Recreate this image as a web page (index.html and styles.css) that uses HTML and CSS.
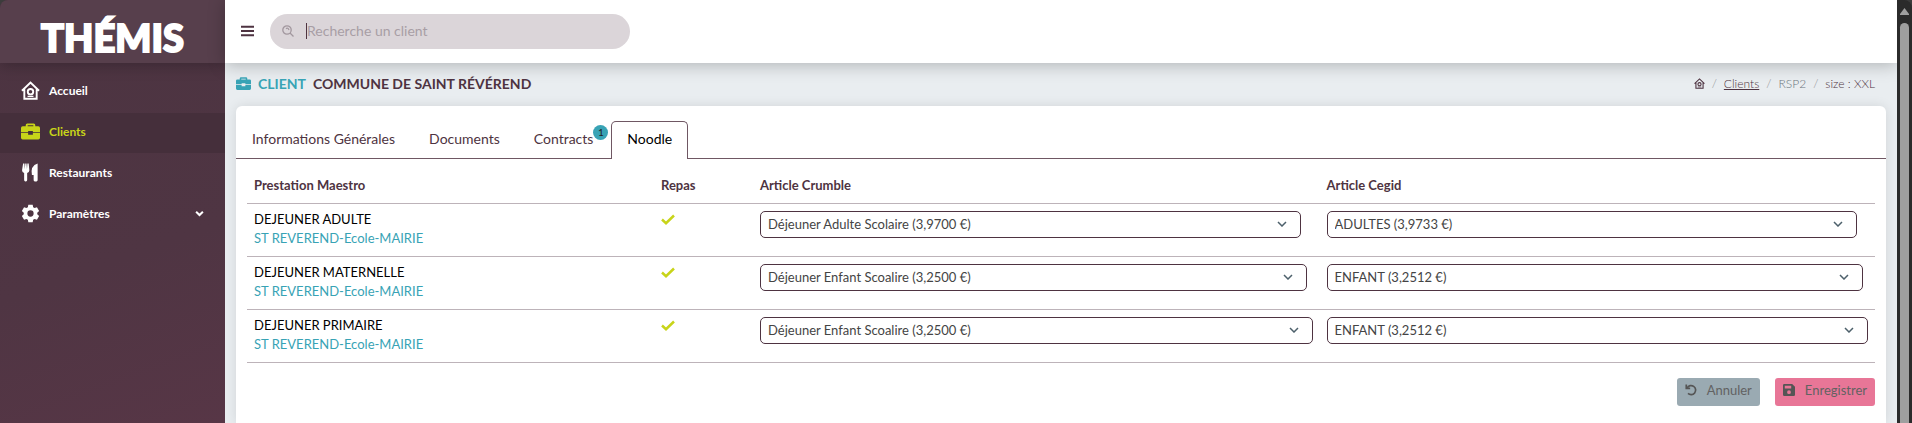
FILE: index.html
```html
<!DOCTYPE html>
<html lang="fr">
<head>
    <meta charset="UTF-8">
    <meta name="viewport" content="width=device-width, initial-scale=1.0">
    <title>Thémis - Client</title>
    <link rel="stylesheet" href="styles.css">
</head>
<body>
    <svg class="symbols" xmlns="http://www.w3.org/2000/svg">
        <symbol id="home" viewBox="0 0 16 16">
            <path d="M.8 8.2 8 1.4l7.2 6.8M2.8 7v8h10.4V7" fill="none" stroke="currentColor" stroke-width="1.6"/>
            <circle cx="8" cy="9" r="2.3" fill="none" stroke="currentColor" stroke-width="1.6"/>
            <path d="M5.5 13h5" stroke="currentColor" stroke-width="1"/>
        </symbol>
        <symbol id="briefcase" viewBox="0 0 20 17">
            <path fill="currentColor" fill-rule="evenodd" d="M5 3V1.6Q5 0 6.6 0h6.8Q15 0 15 1.6V3h3.2Q20 3 20 4.8V9.200h-7.500V8h-5v1.200H0V4.8Q0 3 1.8 3zm2 0h6V2H7z"/>
            <path fill="currentColor" d="M0 10.2h7.500V12h5v-1.800H20v5q0 1.800-1.800 1.800H1.800Q0 17 0 15.200z"/>
        </symbol>
    </svg>
    <div class="app">
        <aside class="sidebar">
            <div class="logo">THÉMIS</div>
            <nav class="menu">
                <a href="#"><svg class="menu-icon"><use href="#home"/></svg>Accueil</a>
                <a href="#" class="active"><svg class="menu-icon"><use href="#briefcase"/></svg>Clients</a>
                <a href="#">
                    <svg class="menu-icon" viewBox="0 0 18 20">
                        <path fill="currentColor" d="M1.200.5h1.400l.4 6 .5-6h1.300l.5 6 .4-6h1.400l.7 7q0 2.200-2.300 3v7.500q0 1.500-1.400 1.500H3.700q-1.400 0-1.400-1.500v-7.500q-2.200-.8-2.200-3zM16.500.5v17.500q0 1.500-1.300 1.500h-1.600q-1.300 0-1.300-1.500v-5.500H10.500Q8.700 3 16.500.5z"/>
                    </svg>Restaurants
                </a>
                <a href="#">
                    <svg class="menu-icon" viewBox="0 0 20 20">
                        <path fill="currentColor" fill-rule="evenodd" d="M7.700.7h4.600l.5 2.600 1.500.9 2.500-.9 2.300 4-2 1.800v1.800l2 1.800-2.300 4-2.500-.9-1.500.9-.5 2.600H7.700l-.5-2.600-1.500-.9-2.500.9-2.300-4 2-1.800V9.100l-2-1.800 2.300-4 2.500.9 1.500-.9zM10 6.700a3.300 3.300 0 1 0 0 6.600 3.300 3.300 0 0 0 0-6.600z"/>
                    </svg>Paramètres
                    <svg class="chevron" viewBox="0 0 8 6"><path d="M1 1.500 4 4.400 7 1.500" fill="none" stroke="currentColor" stroke-width="1.8"/></svg>
                </a>
            </nav>
        </aside>
        <div class="main">
            <header class="topbar">
                <button type="button" class="burger" aria-label="Menu">
                    <svg viewBox="0 0 12 11"><path d="M0 1.500h12M0 5.500h12M0 9.500h12" stroke="currentColor" stroke-width="1.8"/></svg>
                </button>
                <label class="search">
                    <svg viewBox="0 0 12 12"><circle cx="5" cy="5" r="4.2" fill="none" stroke="currentColor" stroke-width="1.3"/><path d="M8 8l3.500 3.500M4 3.600q2-1.400 3 1.400" fill="none" stroke="currentColor" stroke-width="1.3"/></svg>
                    <input type="text" placeholder="Recherche un client" aria-label="Recherche un client">
                </label>
            </header>
            <div class="heading">
                <h1><svg class="title-icon"><use href="#briefcase"/></svg><span>CLIENT</span>COMMUNE DE SAINT RÉVÉREND</h1>
                <nav class="breadcrumb">
                    <a href="#" aria-label="Accueil"><svg><use href="#home"/></svg></a>
                    <i>/</i>
                    <a href="#">Clients</a>
                    <i>/</i>
                    <span class="current">RSP2</span>
                    <i>/</i>
                    <span>size : XXL</span>
                </nav>
            </div>
            <section class="card">
                <nav class="tabs">
                    <a href="#">Informations Générales</a>
                    <a href="#">Documents</a>
                    <a href="#">Contracts<span class="badge">1</span></a>
                    <a href="#" class="active">Noodle</a>
                </nav>
                <div class="panel">
                    <table>
                        <thead>
                            <tr>
                                <th class="col-prestation">Prestation Maestro</th>
                                <th class="col-repas">Repas</th>
                                <th class="col-crumble">Article Crumble</th>
                                <th>Article Cegid</th>
                            </tr>
                        </thead>
                        <tbody>
                            <tr>
                                <td>DEJEUNER ADULTE<span class="place">ST REVEREND-Ecole-MAIRIE</span></td>
                                <td><svg class="check" viewBox="0 0 14 11"><path d="M1 5.500 5 9.200 13 1.500"/></svg></td>
                                <td><select class="short" aria-label="Article Crumble"><option>Déjeuner Adulte Scolaire (3,9700 €)</option></select></td>
                                <td><select class="short" aria-label="Article Cegid"><option>ADULTES (3,9733 €)</option></select></td>
                            </tr>
                            <tr>
                                <td>DEJEUNER MATERNELLE<span class="place">ST REVEREND-Ecole-MAIRIE</span></td>
                                <td><svg class="check" viewBox="0 0 14 11"><path d="M1 5.500 5 9.200 13 1.500"/></svg></td>
                                <td><select class="medium" aria-label="Article Crumble"><option>Déjeuner Enfant Scoalire (3,2500 €)</option></select></td>
                                <td><select class="medium" aria-label="Article Cegid"><option>ENFANT (3,2512 €)</option></select></td>
                            </tr>
                            <tr>
                                <td>DEJEUNER PRIMAIRE<span class="place">ST REVEREND-Ecole-MAIRIE</span></td>
                                <td><svg class="check" viewBox="0 0 14 11"><path d="M1 5.500 5 9.200 13 1.500"/></svg></td>
                                <td><select aria-label="Article Crumble"><option>Déjeuner Enfant Scoalire (3,2500 €)</option></select></td>
                                <td><select aria-label="Article Cegid"><option>ENFANT (3,2512 €)</option></select></td>
                            </tr>
                        </tbody>
                    </table>
                    <div class="actions">
                        <button type="button" class="cancel">
                            <svg viewBox="0 0 14 14"><path d="M2.500 4.500A5.300 5.300 0 1 1 3.500 11" fill="none" stroke="currentColor" stroke-width="2"/><path d="M.5.500v5.500H6V4H2.500V.500z" fill="currentColor"/></svg>Annuler
                        </button>
                        <button type="button" class="save">
                            <svg viewBox="0 0 12 12"><path fill="currentColor" fill-rule="evenodd" d="M1.300 0h7.900L12 2.800v7.900q0 1.300-1.300 1.300H1.300Q0 12 0 10.700V1.300Q0 0 1.300 0zm.5 1.800v2.700h6.400V1.800zM6 6.300a1.900 1.900 0 1 0 0 3.800 1.900 1.900 0 0 0 0-3.800z"/></svg>Enregistrer
                        </button>
                    </div>
                </div>
            </section>
        </div>
        <div class="scroll">
            <svg viewBox="0 0 9 7"><path fill="currentColor" d="M4.500 0 9 6v1H0V6z"/></svg>
            <div class="thumb"></div>
        </div>
    </div>
</body>
</html>
```
FILE: styles.css
```css
*{
    box-sizing: border-box;
}
body{
    margin:0;
    background:#3c3c3c;
    color:#4e3341;
    font-family: Lato, "Liberation Sans", sans-serif;
    font-size:14px;
    line-height:19px;
}
a{
    color:inherit;
    text-decoration:none;
}
.symbols{
    display:none;
}
.app{
    display:flex;
    height:100vh;
    overflow:hidden;
}

/* sidebar */
.sidebar{
    width:225px;
    flex-shrink:0;
    border-top-left-radius:8px;
    background:linear-gradient(160deg, #4c3441 0%, #4f3543 60%, #573646 100%);
    color:#fff;
    overflow:hidden;
}
.logo{
    height:63px;
    padding-top:13px;
    background:#573f4c;
    box-shadow:0 2px 14px rgba(0,0,0,.25);
    font-size:38px;
    font-weight:900;
    line-height:48px;
    text-align:center;
    -webkit-text-stroke:2px #fff;
}
.menu{
    display:flex;
    flex-direction:column;
    gap:1px;
    padding-top:9px;
}
.menu a{
    display:flex;
    align-items:center;
    gap:9px;
    height:40px;
    padding:0 21px 3px;
    font-size:12px;
    font-weight:700;
}
.menu a.active{
    background:#452f3b;
    color:#c8d419;
}
.menu-icon{
    width:19px;
    height:19px;
}
.chevron{
    width:9px;
    height:7px;
    margin-left:auto;
}

/* header */
.main{
    display:flex;
    flex-direction:column;
    flex:1;
    min-width:0;
    background:#e9edf0;
}
.topbar{
    display:flex;
    align-items:center;
    flex-shrink:0;
    gap:16px;
    height:63px;
    padding-left:16px;
    background:#fff;
    box-shadow:0 2px 16px rgba(0,0,0,.25);
}
.burger{
    display:flex;
    padding:0 0 2px;
    border:0;
    background:none;
    color:#4e3341;
}
.burger svg{
    width:13px;
    height:12px;
}
.search{
    display:flex;
    align-items:center;
    gap:12px;
    width:360px;
    height:35px;
    padding:0 12px 2px;
    border-radius:18px;
    background:#dbd5d9;
    color:#a2979e;
}
.search svg{
    width:12px;
    height:12px;
}
.search input{
    flex:1;
    min-width:0;
    height:16px;
    padding:0;
    border:0;
    border-left:1px solid #4e3341;
    outline:0;
    background:none;
    color:#4e3341;
    font:14px Lato, sans-serif;
}
.search input::placeholder{
    color:#a89ea5;
}
.heading{
    display:flex;
    justify-content:space-between;
    align-items:center;
    height:43px;
    padding:0 22px 2px 11px;
}
h1{
    display:flex;
    align-items:center;
    gap:7px;
    margin:0;
    font-size:14px;
    font-weight:700;
}
h1 span, .title-icon{
    color:#38a3b5;
}
.title-icon{
    width:15px;
    height:13px;
}
.breadcrumb{
    display:flex;
    align-items:center;
    gap:7px;
    font-size:12px;
    font-weight:300;
}
.breadcrumb a{
    text-decoration:underline;
}
.breadcrumb svg{
    display:block;
    width:11px;
    height:11px;
}
.breadcrumb i{
    color:#8d8d92;
    font-style:normal;
}
.breadcrumb .current{
    color:#6c757d;
}

/* card */
.card{
    flex:1;
    margin:0 11px;
    padding-top:15px;
    border-radius:6px 6px 0 0;
    background:#fff;
    box-shadow:0 0 12px rgba(0,0,0,.1);
}
.tabs{
    display:flex;
    gap:2px;
    height:38px;
    border-bottom:1px solid #6f5763;
}
.tabs a{
    position:relative;
    height:38px;
    padding:7px 15px;
    border:1px solid transparent;
    border-bottom:0;
    border-radius:5px 5px 0 0;
}
.tabs a.active{
    border-color:#6f5763;
    background:#fff;
    color:#000;
}
.badge{
    position:absolute;
    top:3px;
    right:0;
    width:15px;
    height:15px;
    border-radius:50%;
    background:#38a3b5;
    color:#222;
    font-size:10px;
    line-height:15px;
    text-align:center;
}
.panel{
    padding:8px 11px;
}
table{
    width:100%;
    border-collapse:collapse;
    table-layout:fixed;
    font-size:13px;
}
th, td{
    padding:6px 7px;
    border-bottom:1px solid #bdb3b9;
    text-align:left;
    vertical-align:top;
}
th{
    height:36px;
    padding-top:9px;
    font-weight:700;
}
td{
    height:53px;
    color:#000;
}
.col-prestation{
    width:25%;
}
.col-repas{
    width:99px;
}
.col-crumble{
    width:34.8%;
}
.place{
    display:block;
    color:#38a3b5;
}
.check{
    display:block;
    width:14px;
    height:11px;
    margin-top:4px;
    fill:none;
    stroke:#c8d419;
    stroke-width:2.5;
}
select{
    display:block;
    width:100%;
    height:27px;
    margin-top:1px;
    padding:0 7px;
    border:1px solid #4e3341;
    border-radius:5px;
    appearance:none;
    background:#fff url("data:image/svg+xml,%3Csvg xmlns='http://www.w3.org/2000/svg' viewBox='0 0 10 6'%3E%3Cpath d='M1 1l4 4 4-4' fill='none' stroke='%234d606b' stroke-width='1.5'/%3E%3C/svg%3E") no-repeat right 13px center / 10px 6px;
    color:#444;
    font:13px Lato, sans-serif;
}
.short{
    width:98%;
}
.medium{
    width:99%;
}
.actions{
    display:flex;
    justify-content:flex-end;
    gap:15px;
    margin-top:15px;
}
.actions button{
    display:flex;
    align-items:center;
    gap:10px;
    height:28px;
    padding:0 8px 3px;
    border:0;
    border-radius:3px;
    color:#626262;
    font:13px Lato, sans-serif;
}
.actions svg{
    width:12px;
    height:12px;
    color:#555;
}
.actions .cancel{
    background:#9aaab2;
}
.actions .save{
    background:#e87697;
}

/* scrollbar */
.scroll{
    display:flex;
    flex-direction:column;
    align-items:center;
    gap:8px;
    width:15px;
    flex-shrink:0;
    padding-top:8px;
    border-top-right-radius:8px;
    background:#2b2b2b;
    color:#9f9f9f;
}
.scroll svg{
    width:9px;
    height:7px;
}
.thumb{
    flex:1;
    width:9px;
    border-radius:5px 5px 0 0;
    background:#9f9f9f;
}
```
